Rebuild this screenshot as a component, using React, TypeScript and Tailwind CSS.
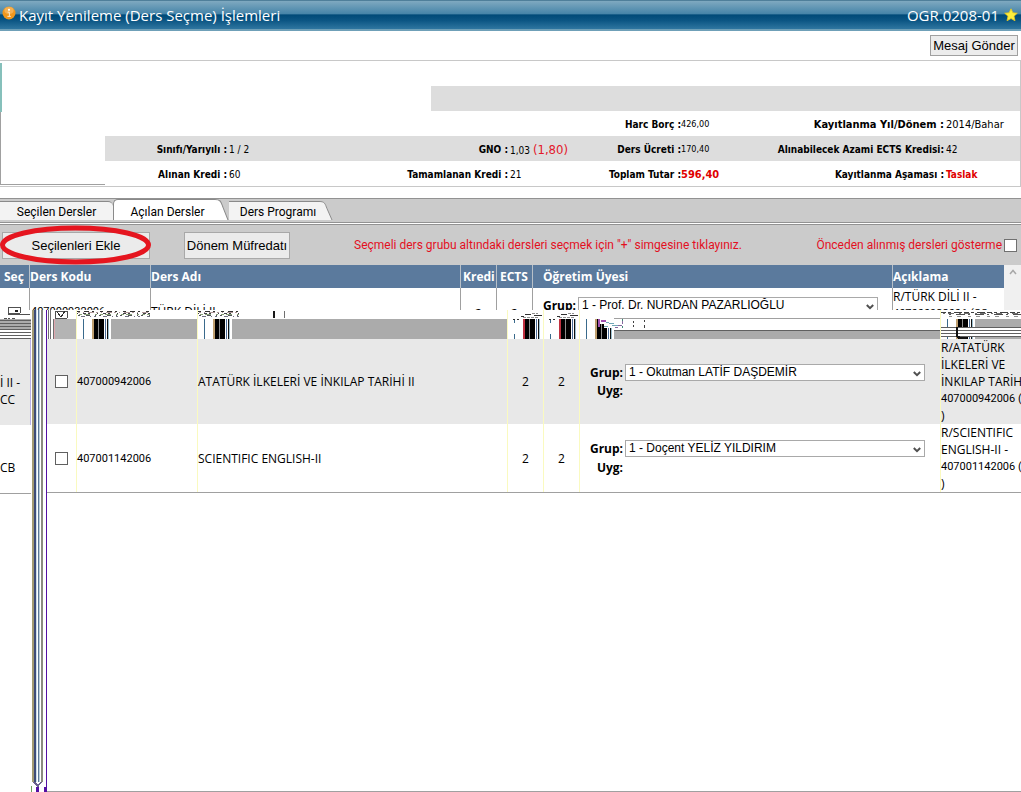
import React, { useState } from 'react';

type Ders = {
  kod: string;
  ad: string;
  kredi: number;
  ects: number;
  hoca: string;
  aciklama: string[];
  zemin: string;
};

const dersler: Ders[] = [
  {
    kod: '407000942006',
    ad: 'ATATÜRK İLKELERİ VE İNKILAP TARİHİ II',
    kredi: 2,
    ects: 2,
    hoca: '1 - Okutman LATİF DAŞDEMİR',
    aciklama: ['R/ATATÜRK', 'İLKELERİ VE', 'İNKILAP TARİHİ II -', '407000942006 (CC', ')'],
    zemin: 'bg-[#e8e8e8]',
  },
  {
    kod: '407001142006',
    ad: 'SCIENTIFIC ENGLISH-II',
    kredi: 2,
    ects: 2,
    hoca: '1 - Doçent YELİZ YILDIRIM',
    aciklama: ['R/SCIENTIFIC', 'ENGLISH-II -', '407001142006 (CB', ')'],
    zemin: 'bg-white',
  },
];

const tabs = ['Seçilen Dersler', 'Açılan Dersler', 'Ders Programı'];
const tabWidths = ['w-[113px]', 'w-[102px]', 'w-[90px]'];

// === PARÇALAR ===
function GrupSelect({ id, hoca }: { id: string; hoca: string }) {
  return (
    <div className="flex h-[18px] items-center">
      <label htmlFor={id} className="w-[45px] shrink-0 pr-[2px] text-right font-bold">
        Grup:
      </label>
      <div className="relative w-[300px] shrink-0">
        <select
          id={id}
          className="block h-[17px] w-full appearance-none border border-[#a9a9a9] bg-white pl-[3px] font-['Liberation_Sans',Arial,sans-serif] text-[12px] leading-[15px] text-black"
        >
          <option>{hoca}</option>
        </select>
        <svg className="pointer-events-none absolute right-[4px] top-[7px]" width="8" height="6" viewBox="0 0 8 6">
          <path d="M0.8 1L4 4.2L7.2 1" fill="none" stroke="#505050" strokeWidth="2" />
        </svg>
      </div>
    </div>
  );
}

function Hoca({ id, hoca }: { id: string; hoca: string }) {
  return (
    <div className="pt-[1px]">
      <GrupSelect id={id} hoca={hoca} />
      <div className="h-[20px] w-[45px] pr-[2px] text-right font-bold leading-[20px]">Uyg:</div>
    </div>
  );
}

function Bilgi({ ad, children, buyuk, dar }: { ad: string; children: React.ReactNode; buyuk?: boolean; dar?: boolean }) {
  return (
    <>
      <dt className={`text-right font-bold ${buyuk ? 'text-[11px]' : 'text-[10px]'} ${dar ? 'pr-0' : 'pr-[2px]'}`}>{ad}</dt>
      <dd className={buyuk ? 'text-[11px]' : dar ? 'text-[9px]' : 'text-[10px]'}>{children}</dd>
    </>
  );
}

function Bars({ karala }: { karala?: boolean }) {
  return (
    <svg className="block shrink-0" width="34" height="29" viewBox="0 0 34 29" shapeRendering="crispEdges">
      <rect width="34" height="29" fill="#ffffff" />
      <rect x="6" y="9" width="1" height="20" fill="#3a6a8c" />
      <rect x="15" y="9" width="2" height="20" fill={karala ? '#c03040' : '#c0a070'} />
      <rect x="17" y="9" width="4" height="20" fill="#000000" />
      <rect x="21" y="9" width="1" height="20" fill="#8c8c8c" />
      <rect x="22" y="9" width="5" height="20" fill="#000000" />
      <rect x="28" y="9" width="1" height="20" fill="#4a6c98" />
      <rect x="30" y="9" width="1" height="20" fill="#101010" />
      <rect x="31" y="9" width="1" height="20" fill="#9cc0d0" />
      {karala && (
        <>
          <rect x="5" y="13" width="3" height="11" fill="#ffffff" />
          <path d="M5 9.5h2M9 9.5h2M13 6.5h3M17 4.5h6M26 5.5h8" stroke="#303030" strokeWidth="1" />
          <path d="M15 7.5h16M24 3.5h6" stroke="#909090" strokeDasharray="3 1" />
        </>
      )}
    </svg>
  );
}

function Karalama({ width }: { width: number }) {
  return (
    <svg className="absolute left-0 top-0" width={width} height="9" viewBox={`0 0 ${width} 9`} shapeRendering="crispEdges">
      <path d={`M0 1.5H${width}`} stroke="#303030" strokeDasharray="3 4 5 3 2 6" />
      <path d={`M1 2.5H${width}`} stroke="#b09898" strokeDasharray="2 3 1 4 6 2" />
      <path d={`M0 3.5H${width}`} stroke="#404048" strokeDasharray="1 5 3 2 2 7" />
      <path d={`M2 4.5H${width}`} stroke="#88a078" strokeDasharray="3 2 6 5 2 3" />
      <path d={`M1 5.5H${width}`} stroke="#505058" strokeDasharray="2 6 4 5 1 3" />
      <path d={`M4 6.5H${width}`} stroke="#707080" strokeDasharray="4 5 1 3 2 7" />
    </svg>
  );
}

function BozukSatir() {
  return (
    <tr aria-hidden="true">
      <td>
        <svg className="block" width="29" height="29" viewBox="0 0 29 29" shapeRendering="crispEdges">
          <rect width="29" height="29" fill="#ffffff" />
          <rect x="8" y="9" width="21" height="20" fill="#b4b4b4" />
          <path d="M1.5 0V29M3.5 0V29M6.5 9V29" stroke="#707070" />
          <path d="M7.5 9V29" stroke="#e0a8b0" />
          <path d="M8 1.5h12M8.5 1v7M8 8.5h12M20.5 1v7" stroke="#505050" />
          <path d="M10 2l4 5 4-6" stroke="#303030" fill="none" />
        </svg>
      </td>
      <td className="border-l border-[#fafac0]">
        <div className="relative flex h-[29px]">
          <Bars />
          <div className="mt-[9px] flex-1 bg-[#ababab]" />
          <Karalama width={73} />
        </div>
      </td>
      <td className="border-l border-[#fafac0]">
        <div className="relative flex h-[29px]">
          <Bars />
          <div className="mt-[9px] flex-1 bg-[#ababab]" />
          <Karalama width={42} />
          <svg className="absolute left-[74px] top-0" width="16" height="9" viewBox="0 0 16 9" shapeRendering="crispEdges">
            <rect x="1" y="1" width="2" height="7" fill="#181818" />
            <rect x="12" y="1" width="1" height="7" fill="#707070" />
          </svg>
        </div>
      </td>
      <td className="border-l border-[#fafac0]">
        <Bars karala />
      </td>
      <td className="border-l border-[#fafac0]">
        <Bars karala />
      </td>
      <td className="border-l border-[#fafac0]">
        <div className="relative flex h-[29px]">
          <Bars />
          <div className="flex flex-1 flex-col pt-[8px]">
            <div className="h-[13px] border-y border-b-[#606060] border-t-[#a0a0a0] bg-white" />
            <div className="flex-1 bg-[#ababab]" />
          </div>
          <svg className="absolute left-[18px] top-[8px]" width="50" height="12" viewBox="0 0 50 12" shapeRendering="crispEdges">
            <path d="M0 1h17v9H6V6H0z" fill="#ffffff" />
            <path d="M1 1v8M3 3h5" stroke="#a050b0" strokeWidth="2" />
            <path d="M6 8.5h4M11 5.5h5M14 7.5h6M8 4.5h3" stroke="#70a8b8" />
            <path d="M20 7.5h4M24 2.5v3M17 9.5h3" stroke="#8868a0" />
            <path d="M35.5 3v2M35.5 7v2M46.5 2v2M46.5 7v3" stroke="#404040" />
            <path d="M24.5 1v2M24.5 8v2" stroke="#408878" />
          </svg>
        </div>
      </td>
      <td className="border-l border-[#fafac0]">
        <div className="relative flex h-[29px] overflow-hidden">
          <Bars />
          <div className="mt-[9px] flex-1 bg-[#ababab]" />
          <svg className="absolute left-0 top-0" width="80" height="29" viewBox="0 0 80 29" shapeRendering="crispEdges">
            <path d="M0 2.5H80" stroke="#404040" strokeDasharray="5 2 3 3 8 2" />
            <path d="M2 3.5H80" stroke="#707070" strokeDasharray="2 3 6 5" />
            <path d="M8 4.5H80" stroke="#505050" strokeDasharray="2 5 9 3" />
            <path d="M8 6.5H80" stroke="#909090" strokeDasharray="3 5 4 7" />
            <rect x="0" y="17" width="80" height="10" fill="#ffffff" />
            <path d="M0 17.5H80M0 20.5H80M0 23.5H80M0 26.5H80" stroke="#606060" />
            <path d="M16 17v9l3 2h7" fill="none" stroke="#101010" strokeWidth="2" />
          </svg>
        </div>
      </td>
    </tr>
  );
}

export default function App() {
  const [aktif, setAktif] = useState(1);

  return (
    <div className="flex min-h-screen flex-col bg-white font-['Open_Sans','Noto_Sans',sans-serif] text-[12px] leading-[17px] text-black">
      {/* === BAŞLIK === */}
      <header className="flex h-[31px] items-center border-b-2 border-t border-b-[#6fa0b8] border-t-[#4f7f9a] bg-[linear-gradient(to_bottom,#7fa9c0_0%,#4785a9_45%,#004a78_50%,#0c5684_70%,#2f76a0_100%)] pl-[2px] pr-[3px] text-white">
        <svg width="14" height="14" viewBox="0 0 14 14" className="mb-[4px]">
          <circle cx="7" cy="7" r="6.5" fill="#f0971c" />
          <ellipse cx="7" cy="4.5" rx="4.6" ry="3.4" fill="#f6b050" />
          <circle cx="7" cy="3.8" r="1.1" fill="#fff" />
          <path d="M5.6 6.2h1.8v4M5.4 10.4h3.4" stroke="#fde8c8" strokeWidth="1" fill="none" />
        </svg>
        <h1 className="flex-1 pl-[3px] text-[15px] leading-[20px]">Kayıt Yenileme (Ders Seçme) İşlemleri</h1>
        <span className="pr-[5px] text-[15px] leading-[20px]">OGR.0208-01</span>
        <svg width="14" height="14" viewBox="0 0 14 14">
          <path
            d="M7 0.8L8.9 4.8L13.3 5.2L10 8.2L11 12.8L7 10.5L3 12.8L4 8.2L0.7 5.2L5.1 4.8Z"
            fill="#fdee3c"
            stroke="#e8c820"
            strokeWidth="0.8"
          />
        </svg>
      </header>

      <div className="flex h-[29px] items-center justify-end pr-[3px]">
        <button
          type="button"
          className="h-[21px] w-[88px] border border-[#a0a0a0] bg-[#ececec] font-['Liberation_Sans',Arial,sans-serif] text-[13px] leading-[18px] whitespace-nowrap"
        >
          Mesaj Gönder
        </button>
      </div>

      {/* === ÖĞRENCİ BİLGİLERİ === */}
      <section className="flex h-[127px] border-y border-r border-[#c8c8c8] font-['DejaVu_Sans_Condensed','DejaVu_Sans',sans-serif]">
        <div className="mb-[1px] flex w-[105px] shrink-0 flex-col border-b border-[#a0a0a0] pt-[2px]">
          <div className="h-[49px] border-l-2 border-[#86c0bb]" />
          <div className="flex-1 border-l border-[#a0a0a0]" />
        </div>
        <div className="flex-1 whitespace-nowrap leading-[27px]">
          <div className="h-[25px]" />
          <div className="ml-[326px] h-[25px] bg-[#dddddd]" />
          <dl className="grid h-[25px] grid-cols-[124fr_102fr_179fr_91fr_80fr_61fr_204fr_74fr]">
            <div className="col-span-4" />
            <Bilgi ad="Harc Borç :" dar>
              426,00
            </Bilgi>
            <Bilgi ad="Kayıtlanma Yıl/Dönem :" buyuk>
              2014/Bahar
            </Bilgi>
          </dl>
          <dl className="grid h-[25px] grid-cols-[124fr_102fr_179fr_91fr_80fr_61fr_204fr_74fr] bg-[#dddddd]">
            <Bilgi ad="Sınıfı/Yarıyılı :">1 / 2</Bilgi>
            <Bilgi ad="GNO :">
              1,03 <span className="text-[13px] text-[#e3182a]">(1,80)</span>
            </Bilgi>
            <Bilgi ad="Ders Ücreti :" dar>
              170,40
            </Bilgi>
            <Bilgi ad="Alınabilecek Azami ECTS Kredisi:">42</Bilgi>
          </dl>
          <dl className="grid h-[25px] grid-cols-[124fr_102fr_179fr_91fr_80fr_61fr_204fr_74fr]">
            <Bilgi ad="Alınan Kredi :">60</Bilgi>
            <Bilgi ad="Tamamlanan Kredi :">21</Bilgi>
            <Bilgi ad="Toplam Tutar :" dar>
              <b className="text-[11px] text-[#e00000]">596,40</b>
            </Bilgi>
            <Bilgi ad="Kayıtlanma Aşaması :">
              <b className="text-[#e00000]">Taslak</b>
            </Bilgi>
          </dl>
        </div>
      </section>

      {/* === SEKMELER === */}
      <nav className="mt-[11px] flex h-[25px] items-start border-y border-[#929292] bg-[#cbcbcb]">
        {tabs.map((t, i) => (
          <div key={t} className="flex items-end self-start">
            <button
              type="button"
              onClick={() => setAktif(i)}
              className={`border-t border-[#8a8a8a] font-[Roboto,sans-serif] text-[12px] leading-[17px] whitespace-nowrap ${tabWidths[i]} ${
                i === aktif ? 'h-[21px] rounded-tl-[5px] border-l bg-white pt-[4px] pl-[6px]' : 'mt-[2px] h-[19px] bg-[#f3f3f3] pt-[2px]'
              } ${i === 0 ? 'rounded-tr-[5px]' : ''} ${i === 2 ? 'pl-[8px]' : ''}`}
            >
              {t}
            </button>
            {i > 0 && (
              <svg width="14" height={i === aktif ? 21 : 19} viewBox="0 0 14 20" preserveAspectRatio="none">
                <path d="M0 0.5C6 0.5 6 3 8 8L13 20H0Z" fill={i === aktif ? '#ffffff' : '#f3f3f3'} />
                <path d="M0 0.5C6 0.5 6 3 8 8L13 20" fill="none" stroke="#8a8a8a" />
              </svg>
            )}
          </div>
        ))}
      </nav>

      <div className="relative mt-[1px] flex h-[41px] items-center border-t border-[#929292] bg-[#cbcbcb] pl-[2px] pr-[4px]">
        <button
          type="button"
          className="h-[27px] w-[148px] border border-[#a8a8a8] bg-[#ebebeb] font-['Liberation_Sans',Arial,sans-serif] text-[13px]"
        >
          Seçilenleri Ekle
        </button>
        <button
          type="button"
          className="ml-[34px] h-[27px] w-[106px] border border-[#a8a8a8] bg-[#ebebeb] font-['Liberation_Sans',Arial,sans-serif] text-[13px] whitespace-nowrap"
        >
          Dönem Müfredatı
        </button>
        <p className="flex-1 pl-[64px] font-[Roboto,sans-serif] text-[#e3101f]">
          Seçmeli ders grubu altındaki dersleri seçmek için "+" simgesine tıklayınız.
        </p>
        <label htmlFor="onceden" className="pr-[2px] font-[Roboto,sans-serif] text-[#e3101f]">
          Önceden alınmış dersleri gösterme
        </label>
        <input id="onceden" type="checkbox" className="h-[13px] w-[13px] appearance-none border border-[#707070] bg-white" />
        <svg className="pointer-events-none absolute left-0 top-0" width="152" height="41" viewBox="0 0 152 41">
          <ellipse cx="75.5" cy="20" rx="73" ry="17" fill="none" stroke="#e5151f" strokeWidth="5" />
        </svg>
      </div>

      {/* === AÇILAN DERSLER === */}
      <div className="flex h-[45px] overflow-hidden">
        <table className="w-full flex-1 table-fixed border-separate border-spacing-0">
          <thead>
            <tr className="h-[23px] bg-[#5b7a9d] text-left text-white">
              <th className="w-[29px] pl-[4px]">Seç</th>
              <th className="w-[121px] border-l border-[#b8c0c8]">Ders Kodu</th>
              <th className="border-l border-[#b8c0c8]">Ders Adı</th>
              <th className="w-[36px] border-l border-[#b8c0c8] pl-[2px]">Kredi</th>
              <th className="w-[36px] border-l border-[#b8c0c8] pl-[3px]">ECTS</th>
              <th className="w-[360px] border-l border-[#b8c0c8] pl-[10px]">Öğretim Üyesi</th>
              <th className="w-[112px] border-l border-[#b8c0c8]">Açıklama</th>
            </tr>
          </thead>
          <tbody>
            <tr className="align-top">
              <td className="pl-[8px] pt-[19px]">
                <input
                  type="checkbox"
                  aria-label="TÜRK DİLİ II"
                  className="block h-[13px] w-[13px] appearance-none border border-[#505050] bg-white"
                />
              </td>
              <td className="border-l border-[#a0a0a0] pl-[1px] pt-[15px] font-[Roboto,sans-serif] text-[11px]">407000932006</td>
              <td className="border-l border-[#a0a0a0] pt-[15px]">TÜRK DİLİ II</td>
              <td className="border-l border-[#a0a0a0] pt-[17px] text-center">2</td>
              <td className="border-l border-[#a0a0a0] pt-[17px] text-center">2</td>
              <td className="border-l border-[#a0a0a0] pt-[8px]">
                <GrupSelect id="grup-turk" hoca="1 - Prof. Dr. NURDAN PAZARLIOĞLU" />
              </td>
              <td className="border-l border-[#a0a0a0]">
                <div>R/TÜRK DİLİ II -</div>
                <div className="font-[Roboto,sans-serif] text-[11px]">407000932006 (CC</div>
              </td>
            </tr>
          </tbody>
        </table>
        <div className="w-[17px] shrink-0 bg-[#f0f0f0] pl-[5px] pt-[4px]">
          <svg width="8" height="6" viewBox="0 0 8 6">
            <path d="M1 5L4 1.5L7 5" fill="none" stroke="#a8a8a8" strokeWidth="1.5" />
          </svg>
        </div>
      </div>

      <div className="flex flex-1">
        <div className="w-[31px] shrink-0 overflow-hidden whitespace-nowrap">
          <svg className="block" width="31" height="29" viewBox="0 0 31 29" shapeRendering="crispEdges">
            <path d="M8.5 0V3M20.5 0V3M8 3.5h12M8 4.5h22" stroke="#505050" />
            <path d="M15 0h3v2h-3z" fill="#202020" />
            <path d="M4 8.5h11" stroke="#505050" strokeDasharray="3 1 2 2" />
            <rect y="9" width="31" height="10" fill="#ababab" />
            <path d="M0 10.5h31M0 13.5h31M0 16.5h31M0 19.5h31M0 22.5h31M0 25.5h31M0 28.5h31" stroke="#606060" />
          </svg>
          <div className="h-[86px] border-r border-[#b8b0e8] bg-[#e8e8e8] pt-[35px]">
            İ II -
            <br />
            CC
          </div>
          <div className="h-[69px] border-b border-[#a0a0a0] pt-[34px]">CB</div>
        </div>

        {/* dikey çizgiler */}
        <div className="flex w-[16px] shrink-0 flex-col">
          <div className="flex flex-1 pl-[1px]" aria-hidden="true">
            <div className="w-[2px] bg-[#a39b74]" />
            <div className="w-[2px] bg-[#3e4c78]" />
            <div className="w-[1px] bg-[#c8dcec]" />
            <div className="ml-[1px] w-[1px] bg-[#5a7898]" />
            <div className="w-[1px] bg-[#b8ccd8]" />
            <div className="ml-[1px] w-[2px] bg-[#8a8a80]" />
            <div className="ml-[3px] w-[1px] bg-[#5410a4]" />
          </div>
          <svg width="16" height="10" viewBox="0 0 16 10" shapeRendering="crispEdges">
            <path d="M3 0L7 4L10 0" fill="none" stroke="#6c6090" strokeWidth="1.5" />
            <rect x="5" y="5" width="3" height="5" fill="#5410a4" />
            <rect x="13" y="5" width="3" height="5" fill="#5410a4" />
            <rect x="15" y="0" width="1" height="10" fill="#5410a4" />
            <rect x="0" y="4" width="1" height="6" fill="#70a060" />
          </svg>
        </div>

        <div className="min-w-0 flex-1 border-b border-[#a0a0a0]">
          <table className="w-full table-fixed border-separate border-spacing-0">
            <colgroup>
              <col className="w-[29px]" />
              <col className="w-[121px]" />
              <col />
              <col className="w-[36px]" />
              <col className="w-[36px]" />
              <col className="w-[361px]" />
              <col className="w-[81px]" />
            </colgroup>
            <tbody>
              <BozukSatir />
              {dersler.map((d) => (
                <tr key={d.kod} className={d.zemin}>
                  <td className="pl-[8px]">
                    <input
                      type="checkbox"
                      aria-label={d.ad}
                      className="block h-[13px] w-[13px] appearance-none border border-[#606060] bg-white"
                    />
                  </td>
                  <td className="border-l border-[#fafac0] font-[Roboto,sans-serif] text-[11px]">{d.kod}</td>
                  <td className="border-l border-[#fafac0]">{d.ad}</td>
                  <td className="border-l border-[#fafac0] text-center">{d.kredi}</td>
                  <td className="border-l border-[#fafac0] text-center">{d.ects}</td>
                  <td className="border-l border-[#fafac0]">
                    <Hoca id={`grup-${d.kod}`} hoca={d.hoca} />
                  </td>
                  <td className="overflow-hidden border-l border-[#fafac0] whitespace-nowrap">
                    {d.aciklama.map((s) => (
                      <div key={s} className={s.startsWith('4') ? 'font-[Roboto,sans-serif] text-[11px]' : ''}>
                        {s}
                      </div>
                    ))}
                  </td>
                </tr>
              ))}
            </tbody>
          </table>
          <div className="h-px bg-[#a0a0a0]" />
        </div>
      </div>
    </div>
  );
}
